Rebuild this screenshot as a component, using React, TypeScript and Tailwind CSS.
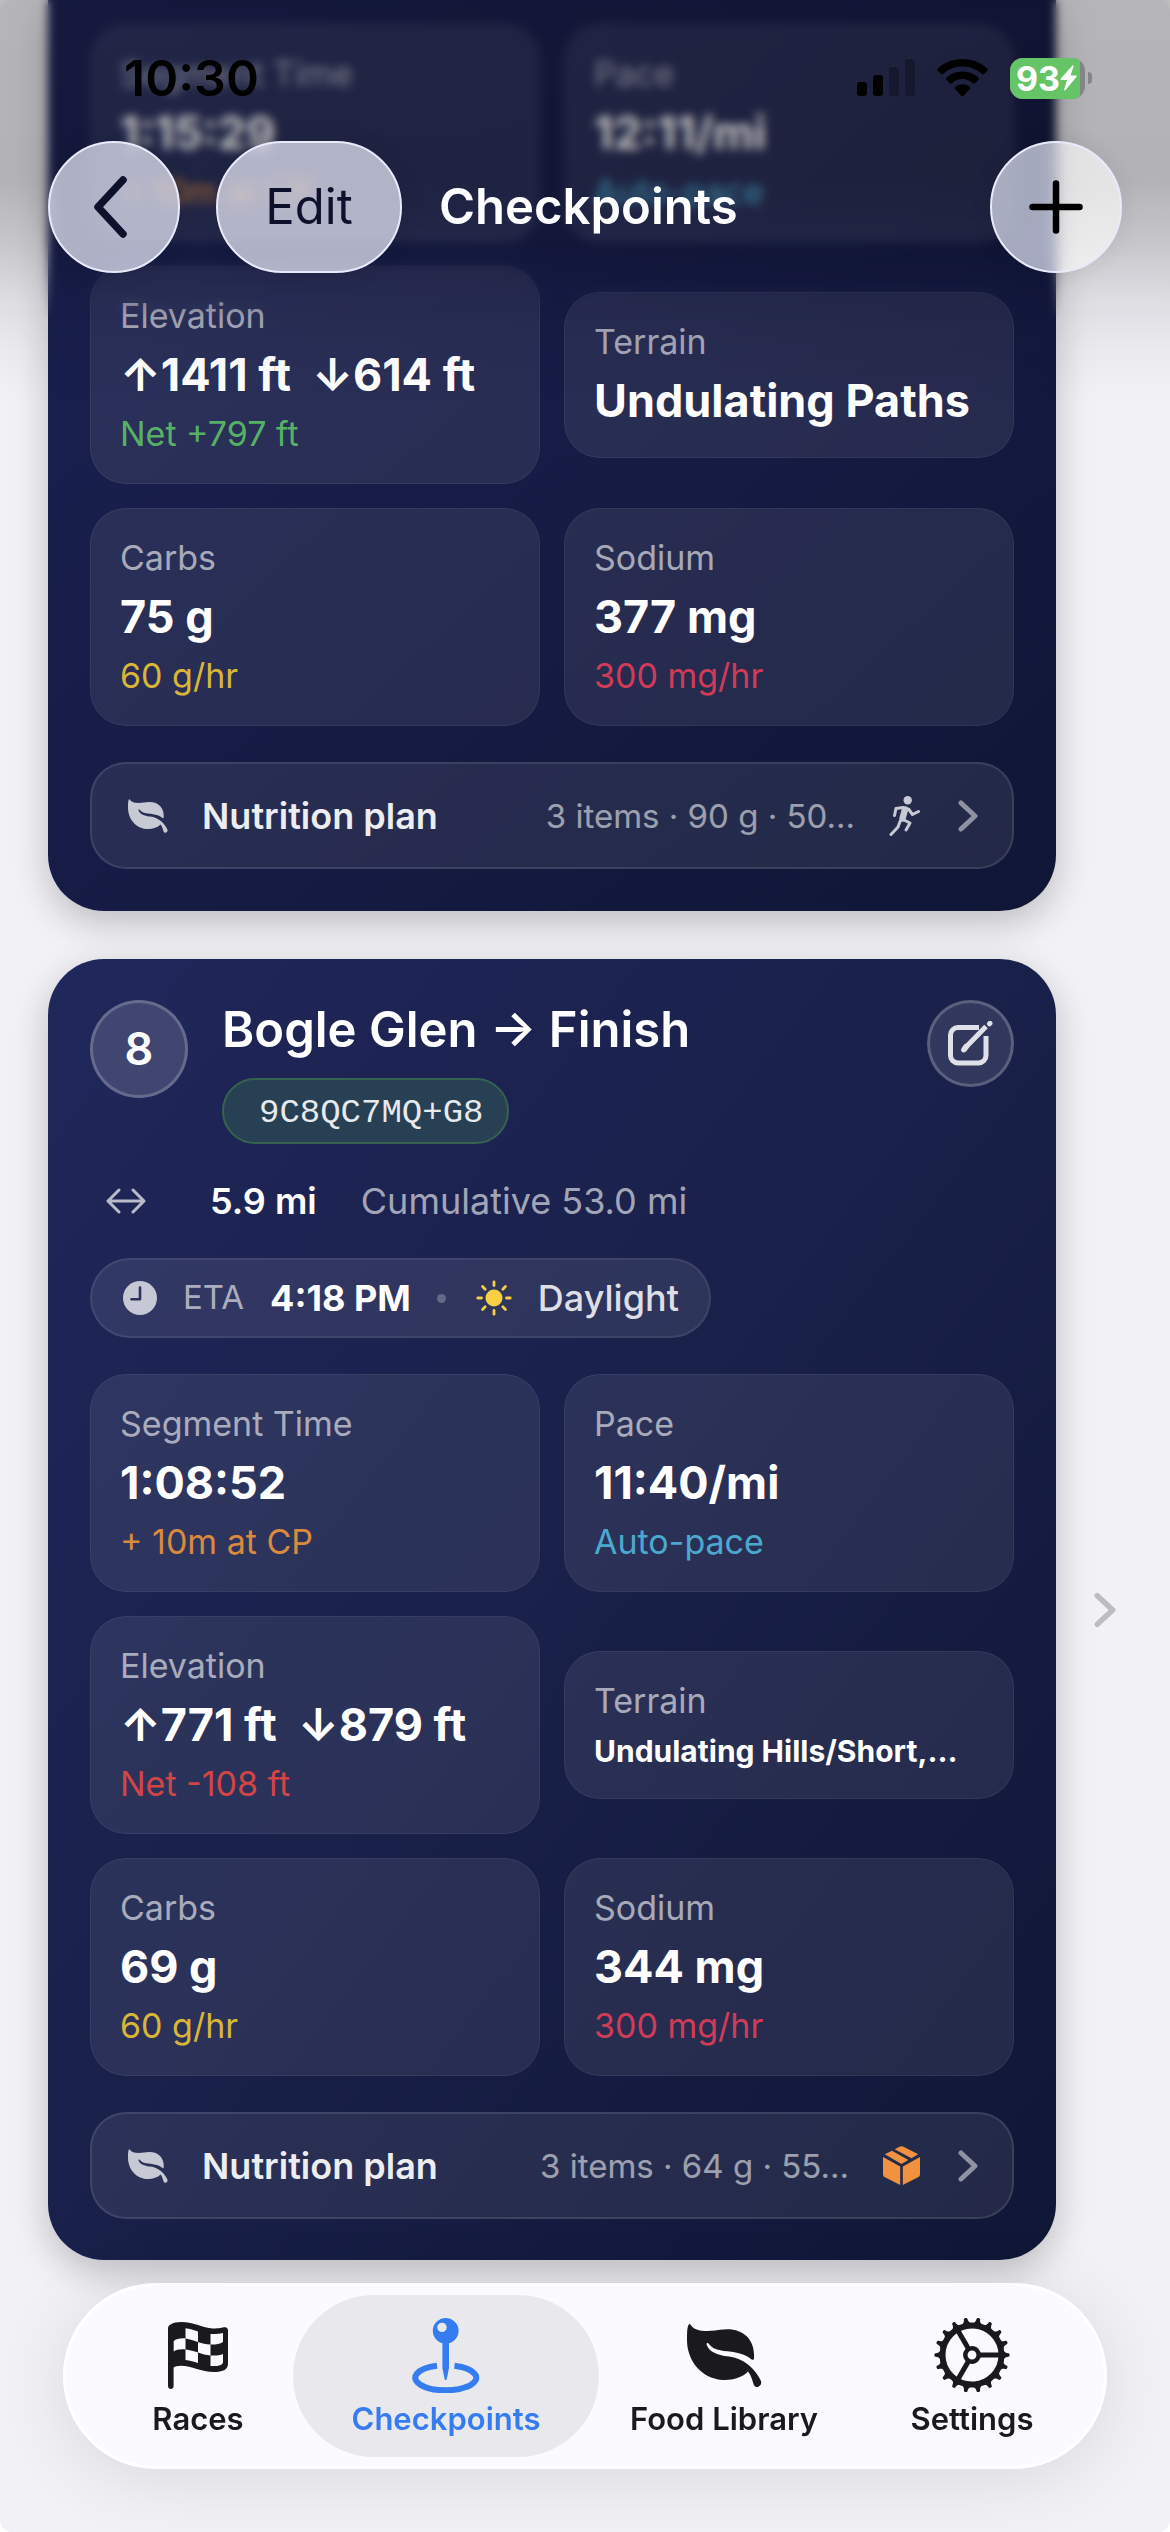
import type { ReactNode } from "react";

type Stat = {
  label: string;
  value: string;
  note?: string;
  noteClass?: string;
  small?: boolean;
};

const previousStats: Stat[] = [
  { label: "Segment Time", value: "1:15:29", note: "+ 10m at CP", noteClass: "text-[#d98a3d]" },
  { label: "Pace", value: "12:11/mi", note: "Auto-pace", noteClass: "text-[#4ba9d0]" },
  { label: "Elevation", value: "↑1411 ft  ↓614 ft", note: "Net +797 ft", noteClass: "text-[#57b164]" },
  { label: "Terrain", value: "Undulating Paths" },
  { label: "Carbs", value: "75 g", note: "60 g/hr", noteClass: "text-[#d9b538]" },
  { label: "Sodium", value: "377 mg", note: "300 mg/hr", noteClass: "text-[#d03c58]" },
];

const finishStats: Stat[] = [
  { label: "Segment Time", value: "1:08:52", note: "+ 10m at CP", noteClass: "text-[#d98a3d]" },
  { label: "Pace", value: "11:40/mi", note: "Auto-pace", noteClass: "text-[#4ba9d0]" },
  { label: "Elevation", value: "↑771 ft  ↓879 ft", note: "Net -108 ft", noteClass: "text-[#d24545]" },
  { label: "Terrain", value: "Undulating Hills/Short,…", small: true },
  { label: "Carbs", value: "69 g", note: "60 g/hr", noteClass: "text-[#d9b538]" },
  { label: "Sodium", value: "344 mg", note: "300 mg/hr", noteClass: "text-[#d03c58]" },
];

function LeafIcon({ className }: { className: string }) {
  return (
    <svg viewBox="0 0 75 63" className={className} fill="currentColor" aria-hidden="true">
      <path d="M2.5 0C5 1 5 7 20 7C28 7 32 5.3 40 5.3C58 5.3 68 17 67 34C67 36 65.5 36.5 64 35C54 26.5 40 28.5 30 25.5C25 24 23 21 21.5 19.5C20 18.5 19 19.5 20 21.5C23 29 33 31.5 42 32.5C56 34 68 44 74 57C75 61 72 63 70 63C68 63 66.8 61.5 66.5 60C65 55 64 51 61 47.5C56 53 47 56 38 56C16 56 0 38 0 16C0 6 .5 1 2.5 0Z" />
    </svg>
  );
}

function FlagIcon() {
  return (
    <svg viewBox="0 0 60 67" className="h-[67px] w-[60px]" fill="currentColor" aria-hidden="true">
      <path
        fillRule="evenodd"
        d="M0 6C0 3 5 0 13 0C27 0 34 6 45 6.5C51 6.5 54 5.2 57 5.2C59 5.2 60 6.500 60 8.500V42C60 48 54 50 46 50C33 50 24 43.700 13 43.700C9 43.700 7 44.500 5.600 45.500V64C5.600 68 0 68 0 64ZM5.700 19C8 17 13 16 17.500 16.500V27.500C13 27 8 27.500 5.700 29.500ZM17.500 6.300C22 6.800 26 8 30 9.500V20C26 18.500 22 17.300 17.500 16.500ZM17.500 27.500C22 28 26 29 30 30.500V41C26 39.500 22 38.500 17.500 38ZM30 20C34 21.300 38 22.300 42.500 22.500V33.500C38 33 34 32 30 30.500ZM42.500 12C47 12.200 51 12 55 11V20C52 22 47 22.700 42.500 22.500ZM42.500 33.500C47 33.700 52 33.500 55 32V40C55 43.500 49 44.500 42.500 44Z"
      />
    </svg>
  );
}

function PinIcon() {
  return (
    <svg viewBox="0 0 68 75" className="h-[75px] w-[68px]" fill="currentColor" aria-hidden="true">
      <path fillRule="evenodd" d="M33.700 0a12.800 12.800 0 0 1 3.300 25.200V50L34.800 61C34.300 62.500 33 62.500 32.600 61L30.400 50V25.200A12.800 12.800 0 0 1 33.700 0ZM30 4.700a4.700 4.700 0 1 0 0 9.400a4.700 4.700 0 1 0 0-9.400Z" />
      <path d="M42.500 47.800A30.500 12.500 0 1 1 25 47.800" fill="none" stroke="currentColor" strokeWidth="6" />
    </svg>
  );
}

const teeth = Array.from({ length: 18 }, (_, i) => i * 20);

function GearIcon() {
  return (
    <svg viewBox="-38 -38 76 76" className="size-[76px]" fill="none" stroke="currentColor" aria-hidden="true">
      {teeth.map((a) => (
        <path key={a} transform={`rotate(${a})`} d="M31 -5C33 -2.500 34 -2 36.500 -1.800C38 -1.500 38 1.500 36.500 1.800C34 2 33 2.500 31 5Z" fill="currentColor" stroke="none" />
      ))}
      <circle r="29.500" strokeWidth="6" />
      <circle r="6.700" strokeWidth="4.500" />
      {[0, 120, 240].map((a) => (
        <path key={a} transform={`rotate(${a})`} d="M8 0H28" strokeWidth="5" />
      ))}
    </svg>
  );
}

function RunnerIcon() {
  return (
    <svg viewBox="0 0 31 40" className="h-10 w-[31px]" fill="none" stroke="currentColor" strokeWidth="3" strokeLinecap="round" strokeLinejoin="round" aria-hidden="true">
      <circle cx="18.700" cy="4.200" r="4.200" fill="currentColor" stroke="none" />
      <path d="M5.500 19.500L7 12.500L14 11.500" />
      <path d="M19.500 13L23.500 18.500L29.500 15.500" />
      <path d="M16 13.500L13.500 22.500" strokeWidth="6.500" />
      <path d="M14 23.500L21 27L17 34" />
      <path d="M11 25.500L9 31L2 38.500" />
    </svg>
  );
}

function BoxIcon() {
  return (
    <svg viewBox="0 0 37 39" className="h-[39px] w-[37px] text-[#f0923f]" fill="currentColor" aria-hidden="true">
      <path d="M0 11L17.200 20.500V39L2 31.300C.5 30.500 0 29.500 0 28Z" />
      <path d="M37 11L19.800 20.500V39L35 31.300C36.500 30.500 37 29.500 37 28Z" />
      <path d="M9 4.700L25.300 14L18.500 17.900L1.800 8.300Z" />
      <path d="M11.700 3.200L16 .9C17.700 0 19.300 0 21 .9L35.200 8.300L28.500 12.200Z" />
    </svg>
  );
}

function Chevron({ className, stroke }: { className: string; stroke: number }) {
  return (
    <svg viewBox="0 0 20 32" className={className} fill="none" stroke="currentColor" strokeWidth={stroke} strokeLinecap="round" strokeLinejoin="round" aria-hidden="true">
      <path d="M3 3L17 16L3 29" />
    </svg>
  );
}

function StatTile({ label, value, note, noteClass, small }: Stat) {
  return (
    <div className="rounded-[36px] border border-white/6 bg-white/8 px-[29px] py-[29px]">
      <div className="text-[34px] leading-[40px] text-white/60">{label}</div>
      <div
        className={
          small
            ? "mt-3 overflow-hidden text-[30px] leading-[36px] font-bold whitespace-pre text-white"
            : "mt-3 overflow-hidden text-[45px] leading-[54px] font-bold whitespace-pre text-white"
        }
      >
        {value}
      </div>
      {note && <div className={`mt-3 text-[34px] leading-[40px] ${noteClass}`}>{note}</div>}
    </div>
  );
}

function NutritionRow({ summary, icon }: { summary: string; icon: ReactNode }) {
  return (
    <button type="button" className="flex h-[107px] w-full items-center rounded-[36px] border-2 border-white/10 bg-white/8 pr-[34px] pl-9 text-left">
      <LeafIcon className="h-[34px] w-10 text-[#c7c9d4]" />
      <span className="ml-[34px] text-[36px] leading-[44px] font-semibold text-[#ecedf1]">Nutrition plan</span>
      <span className="ml-auto text-[33px] leading-[40px] text-white/55">{summary}</span>
      <span className="ml-[34px] text-[#c7c9d4]">{icon}</span>
      <Chevron className="ml-[38px] h-8 w-5 text-[#8f92a2]" stroke={5} />
    </button>
  );
}

function StatGrid({ stats }: { stats: Stat[] }) {
  return (
    <div className="grid grid-cols-2 items-center gap-6">
      {stats.map((s) => (
        <StatTile key={s.label} {...s} />
      ))}
    </div>
  );
}

function StatusBar() {
  return (
    <div className="flex h-[141px] items-center pt-[15px] pr-[78px] pl-[124px] text-black">
      <time className="text-[50px] leading-[60px] font-semibold">10:30</time>
      <svg viewBox="0 0 58 38" className="ml-auto h-[38px] w-[58px]" role="img" aria-label="Signal">
        <rect x="0" y="23" width="10" height="14" rx="3" />
        <rect x="16" y="16" width="10" height="21" rx="3" />
        <rect x="32" y="8" width="10" height="29" rx="3" opacity=".25" />
        <rect x="48" y="0" width="10" height="37" rx="3" opacity=".25" />
      </svg>
      <svg viewBox="0 0 51 38" className="ml-[22px] h-[38px] w-[51px]" role="img" aria-label="Wi-Fi">
        <path d="M25.500 0C35.500 0 44 3.600 50.300 9.500C51 10.200 51 11 50.400 11.700L47 15C46.400 15.600 45.600 15.600 45 15C39.700 10.200 33 7.500 25.500 7.500C18 7.500 11.300 10.200 6 15C5.400 15.600 4.600 15.600 4 15L.6 11.700C0 11 0 10.200 .7 9.500C7 3.600 15.500 0 25.500 0Z" />
        <path d="M25.500 12.500C31.700 12.500 37.200 14.800 41.500 18.600C42.200 19.300 42.200 20.100 41.500 20.800L38 24.200C37.400 24.800 36.600 24.800 36 24.300C33.200 21.700 29.500 20 25.500 20C21.500 20 17.800 21.700 15 24.300C14.400 24.800 13.600 24.800 13 24.200L9.500 20.800C8.800 20.100 8.800 19.300 9.500 18.600C13.800 14.800 19.300 12.500 25.500 12.500Z" />
        <path d="M25.500 25.300C28.500 25.300 31 26.300 32.800 27.900C33.500 28.600 33.500 29.300 32.900 29.900L26.600 36.700C26 37.400 25 37.400 24.400 36.700L18.100 29.900C17.500 29.300 17.500 28.600 18.200 27.900C20 26.300 22.500 25.300 25.500 25.300Z" />
      </svg>
      <div className="ml-[22px] flex items-center">
        <div className="flex h-[41px] w-[75px] overflow-hidden rounded-[13px] bg-[#858587]">
          <div className="flex w-[70px] items-center bg-[#65c466] pl-[6px] text-white">
            <span className="text-[34px] leading-[41px] font-bold">93</span>
            <svg viewBox="0 0 17 26" className="h-[26px] w-[17px] shrink-0" fill="currentColor" aria-label="Charging">
              <path d="M12.500 .5L.8 13.500C.2 14.300 .6 15 1.500 15H7L4.200 24.500C4 25.500 4.800 25.800 5.500 25L16.400 12C17 11.200 16.600 10.500 15.700 10.500H10.500L13.500 1.500C13.800 .3 13.100 0 12.500 .5Z" />
            </svg>
          </div>
        </div>
        <div className="ml-[3px] h-3 w-1 rounded-r-full bg-[#858587]" />
      </div>
    </div>
  );
}

const glass =
  "flex h-[132px] items-center justify-center rounded-full border-2 border-[#e9eafa] backdrop-blur-[6px] shadow-[0_0_24px_rgba(0,0,0,0.08)]";

function Header() {
  return (
    <header className="fixed inset-x-0 top-0 z-10">
      <div className="absolute inset-x-0 top-0 h-[400px] bg-[linear-gradient(to_bottom,rgba(0,0,0,0.25),rgba(0,0,0,0.26)_45%,rgba(0,0,0,0.17)_62%,rgba(0,0,0,0.08)_75%,rgba(0,0,0,0.03)_87%,transparent)]" />
      <div className="absolute inset-x-0 top-0 h-[320px] backdrop-blur-[5px] [mask-image:linear-gradient(to_bottom,black_75%,transparent)]" />
      <div className="relative">
        <StatusBar />
        <nav className="flex items-center px-12">
          <button type="button" aria-label="Back" className={`${glass} w-[132px] bg-[#f0f1ff]/70`}>
            <svg viewBox="0 0 34 64" className="mr-2 h-16 w-[34px]" fill="none" stroke="#0d112c" strokeWidth="7.500" strokeLinecap="round" strokeLinejoin="round" aria-hidden="true">
              <path d="M30 5L5 32L30 59" />
            </svg>
          </button>
          <button type="button" className={`${glass} ml-9 w-[186px] bg-[#f0f1ff]/70 text-[49px] text-[#0d112c]`}>
            Edit
          </button>
          <h1 className="ml-[37px] text-[49px] leading-[60px] font-semibold text-white">Checkpoints</h1>
          <button
            type="button"
            aria-label="Add checkpoint"
            className={`${glass} ml-auto w-[132px] bg-[linear-gradient(to_right,rgba(236,240,255,0.68)_46%,rgba(255,255,255,0.64)_56%)]`}
          >
            <svg viewBox="0 0 54 54" className="size-[54px]" fill="none" stroke="#000" strokeWidth="6.500" strokeLinecap="round" aria-hidden="true">
              <path d="M27 3.500V50.500M3.500 27H50.500" />
            </svg>
          </button>
        </nav>
      </div>
    </header>
  );
}

const tabs = [
  { name: "Races", width: "flex-[218]", icon: <FlagIcon /> },
  { name: "Checkpoints", width: "flex-[278]", icon: <PinIcon />, active: true },
  { name: "Food Library", width: "flex-[278]", icon: <LeafIcon className="h-[63px] w-[75px]" /> },
  { name: "Settings", width: "flex-[218]", icon: <GearIcon /> },
];

function TabBar() {
  return (
    <nav className="fixed inset-x-[63px] bottom-[63px] z-10 flex h-[186px] rounded-full border-[3px] border-white bg-[#fbfaff] px-[23px] py-[9px] shadow-[0_10px_70px_rgba(0,0,0,0.1)]">
      {tabs.map((t) => (
        <button
          key={t.name}
          type="button"
          aria-current={t.active ? "page" : undefined}
          className={`relative flex min-w-0 basis-0 flex-col items-center justify-center ${t.width} ${t.active ? "text-[#347cf0]" : "text-[#1a191e]"}`}
        >
          {t.active && <span className="absolute -inset-x-[14px] inset-y-0 rounded-full bg-[#e9e8ed]" />}
          <span className="relative flex h-20 items-center">{t.icon}</span>
          <span className="relative mt-[6px] text-[31px] leading-[36px] font-semibold whitespace-nowrap">{t.name}</span>
        </button>
      ))}
    </nav>
  );
}

const cardShadow = "shadow-[0_12px_36px_rgba(0,0,0,0.22)]";

export default function App() {
  return (
    <div className="bg-white">
      <div className="relative min-h-screen overflow-hidden rounded-[12px] bg-[#f2f1f6] pb-64 font-['Inter',sans-serif]">
        <Header />
        <main className="flex flex-col gap-12">
          <section className={`mr-[114px] ml-12 flex flex-col gap-9 rounded-b-[56px] bg-linear-to-br from-[#1c2253] via-[#161c45] to-[#101636] px-[42px] pt-6 pb-[42px] ${cardShadow}`}>
            <StatGrid stats={previousStats} />
            <NutritionRow summary="3 items · 90 g · 50…" icon={<RunnerIcon />} />
          </section>

          <div className="flex items-center pr-[54px] pl-12">
            <section className={`flex min-w-0 flex-1 flex-col gap-9 rounded-[56px] bg-linear-to-br from-[#20275b] via-[#192049] to-[#101636] px-[42px] py-[41px] ${cardShadow}`}>
              <div className="flex items-start">
                <div className="flex size-[98px] shrink-0 items-center justify-center rounded-full border-[3px] border-white/20 bg-white/15 text-[45px] font-semibold text-white">8</div>
                <div className="ml-[34px] flex-1">
                  <h2 className="text-[49px] leading-[60px] font-semibold text-white">Bogle Glen → Finish</h2>
                  <div className="mt-[18px] flex h-[66px] w-fit items-center rounded-full border-2 border-[#35634f] bg-[#284054] pt-1 pr-[24px] pl-[35px] font-['Liberation_Mono',monospace] text-[34px] leading-[40px] text-[#e6eaec]">
                    9C8QC7MQ+G8
                  </div>
                </div>
                <button type="button" aria-label="Edit checkpoint" className="flex size-[87px] items-center justify-center rounded-full border-[3px] border-white/20 bg-white/11 text-[#e0e1e8]">
                  <svg viewBox="0 0 45 45" className="size-[45px]" fill="none" stroke="currentColor" strokeLinecap="butt" aria-hidden="true">
                    <path d="M31 6.500H10A7.500 7.500 0 0 0 2.500 14V34.500A7.500 7.500 0 0 0 10 42H30.500A7.500 7.500 0 0 0 38 34.500V15" strokeWidth="5" />
                    <path d="M38 5.500L19.500 24.500L16.500 28.500L15.500 29L16 28L19 24" strokeWidth="5" strokeLinejoin="round" />
                    <path d="M41.500 2.800L42 2.300" strokeWidth="5" strokeLinecap="round" />
                  </svg>
                </button>
              </div>

              <div className="flex h-[42px] items-center text-[36px] leading-[42px]">
                <svg viewBox="0 0 40 26" className="mx-4 h-[26px] w-10 text-[#b9bbca]" fill="none" stroke="currentColor" strokeWidth="3" strokeLinecap="round" strokeLinejoin="round" aria-hidden="true">
                  <path d="M2 13H38M13 2L2 13L13 24M27 2L38 13L27 24" />
                </svg>
                <span className="ml-12 font-semibold text-white">5.9 mi</span>
                <span className="ml-[44px] text-white/60">Cumulative 53.0 mi</span>
              </div>

              <div className="flex h-20 w-fit items-center rounded-full border-2 border-white/8 bg-white/9 pr-[30px] pl-[31px] text-[36px]">
                <svg viewBox="0 0 34 34" className="size-[34px] text-[#c7c8d6]" aria-hidden="true">
                  <circle cx="17" cy="17" r="17" fill="currentColor" />
                  <path d="M17 6.500V18.200H8.500" fill="none" stroke="#2c325c" strokeWidth="2.600" strokeLinecap="round" strokeLinejoin="round" />
                </svg>
                <span className="ml-[26px] text-[33px] text-white/60">ETA</span>
                <span className="ml-[26px] font-bold text-white">4:18 PM</span>
                <span className="ml-[26px] size-[9px] rounded-full bg-[#646988]" />
                <svg viewBox="-18 -18 36 36" className="ml-[30px] size-9 text-[#f8cf42]" aria-hidden="true">
                  <circle r="8.500" fill="currentColor" />
                  {[0, 45, 90, 135, 180, 225, 270, 315].map((a) => (
                    <path key={a} transform={`rotate(${a})`} d="M12.500 0H16.200" stroke="currentColor" strokeWidth="2.800" strokeLinecap="round" />
                  ))}
                </svg>
                <span className="ml-[26px] font-medium text-[#dedfe6]">Daylight</span>
              </div>

              <StatGrid stats={finishStats} />
              <NutritionRow summary="3 items · 64 g · 55…" icon={<BoxIcon />} />
            </section>
            <Chevron className="ml-[38px] h-9 w-[22px] text-[#bdbdc1]" stroke={5} />
          </div>
        </main>
        <TabBar />
      </div>
    </div>
  );
}
